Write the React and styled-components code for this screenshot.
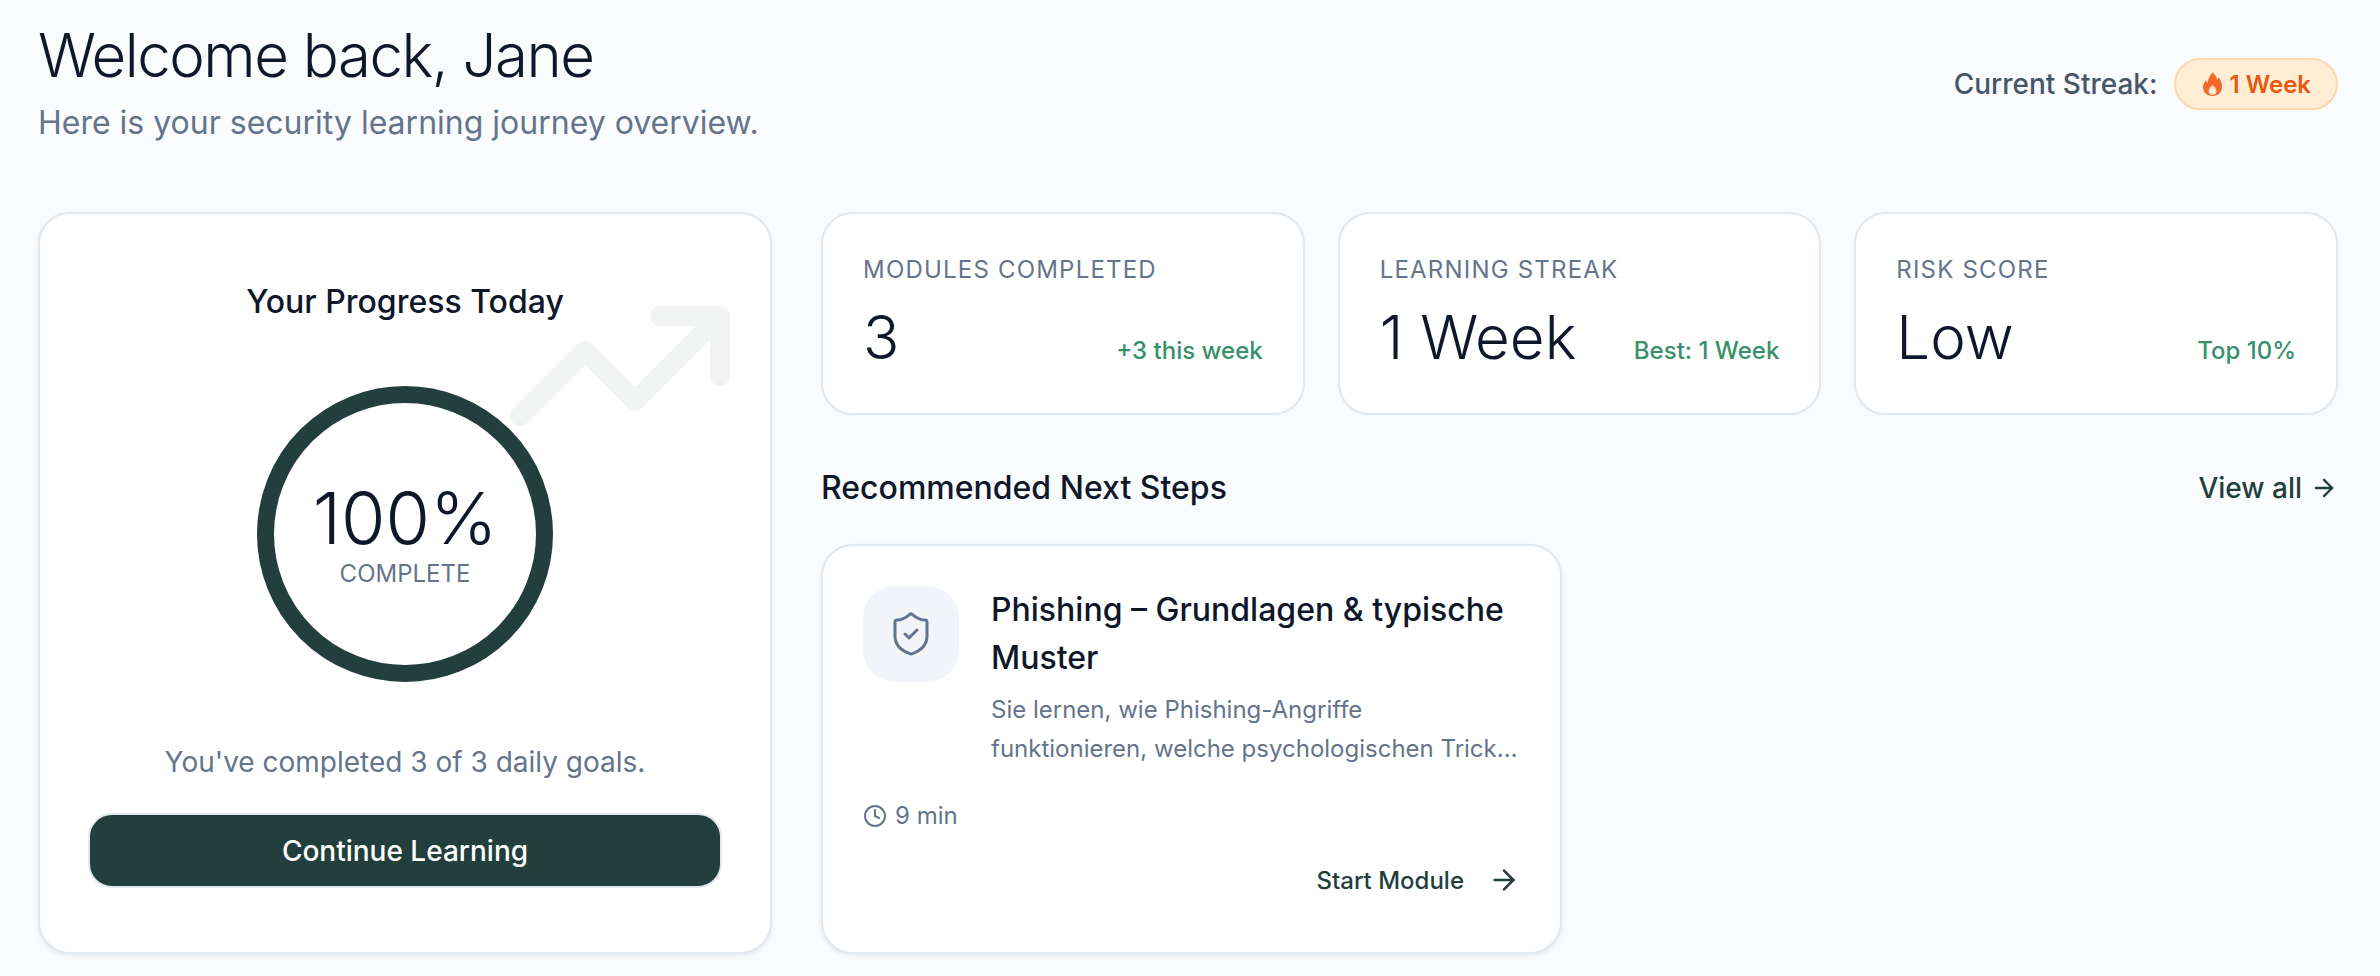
import React from "react";
import styled, { createGlobalStyle } from "styled-components";
import { ArrowRight, Clock, ShieldCheck, TrendingUp } from "lucide-react";

const GlobalStyle = createGlobalStyle`
  * { box-sizing: border-box; }
  body {
    margin: 0;
    background: #f9fbfd;
    font-family: "Inter", "Liberation Sans", sans-serif;
    color: #0f172a;
  }
`;

const Page = styled.div`
  padding: 19px 42px 22px 38px;
`;

const Header = styled.header`
  display: flex;
  justify-content: space-between;
  align-items: center;
  margin-bottom: 65px;
`;

const Title = styled.h1`
  margin: 0;
  font-size: 60px;
  line-height: 72px;
  font-weight: 300;
  letter-spacing: -1.5px;
  color: #0f172a;
`;

const Subtitle = styled.p`
  margin: 8px 0 0;
  font-size: 32px;
  line-height: 48px;
  font-weight: 400;
  color: #64748b;
`;

const Streak = styled.div`
  display: flex;
  align-items: center;
  gap: 17px;
  padding-top: 2px;
  font-size: 28px;
  font-weight: 500;
  color: #475569;
`;

const Badge = styled.span`
  display: flex;
  align-items: center;
  gap: 7px;
  height: 52px;
  padding: 0 25px 0 27px;
  border: 2px solid #fed7aa;
  border-radius: 26px;
  background: #ffedd5;
  font-size: 24px;
  font-weight: 600;
  color: #ea580c;
`;

const Layout = styled.main`
  display: grid;
  grid-template-columns: 734px 1fr;
  gap: 49px;
`;

const Card = styled.section`
  background: #fff;
  border: 2px solid #e2e8f0;
  border-radius: 32px;
  box-shadow: 0 1px 2px rgba(15, 23, 42, 0.03);
`;

const ProgressCard = styled(Card)`
  position: relative;
  overflow: hidden;
  display: flex;
  flex-direction: column;
  align-items: center;
  padding: 64px 48px;
  box-shadow: 0 2px 5px rgba(15, 23, 42, 0.08);
`;

const Watermark = styled.div`
  position: absolute;
  top: 32px;
  right: 30px;
  color: #223f3e;
  opacity: 0.05;
  line-height: 0;
`;

const ProgressTitle = styled.h2`
  margin: 0;
  font-size: 32px;
  line-height: 48px;
  font-weight: 500;
  color: #0f172a;
`;

const Ring = styled.div`
  position: relative;
  width: 320px;
  height: 320px;
  margin-top: 48px;
`;

const RingText = styled.div`
  position: absolute;
  inset: 0;
  display: flex;
  flex-direction: column;
  align-items: center;
  justify-content: center;
`;

const Percent = styled.div`
  font-size: 72px;
  line-height: 80px;
  font-weight: 300;
  color: #0f172a;
`;

const RingLabel = styled.div`
  font-size: 24px;
  line-height: 32px;
  color: #64748b;
  text-transform: uppercase;
`;

const Goals = styled.p`
  margin: 48px 0 31px;
  font-size: 28px;
  line-height: 40px;
  color: #64748b;
`;

const PrimaryButton = styled.button`
  width: 100%;
  height: 75px;
  border: 2px solid #e2e8f0;
  border-radius: 24px;
  background: #223f3e;
  color: #fff;
  font-family: inherit;
  font-size: 28px;
  font-weight: 500;
`;

const RightColumn = styled.div`
  display: flex;
  flex-direction: column;
`;

const Stats = styled.div`
  display: grid;
  grid-template-columns: repeat(3, 1fr);
  gap: 33px;
`;

const StatCard = styled(Card)`
  padding: 40px;
  height: 203px;
`;

const StatLabel = styled.div`
  font-size: 24px;
  line-height: 32px;
  color: #64748b;
  letter-spacing: 1.2px;
  text-transform: uppercase;
`;

const StatRow = styled.div`
  display: flex;
  justify-content: space-between;
  align-items: baseline;
  margin-top: 16px;
`;

const StatValue = styled.div`
  font-size: 60px;
  line-height: 70px;
  font-weight: 300;
  color: #0f172a;
`;

const StatNote = styled.div`
  font-size: 24px;
  font-weight: 500;
  color: #38906a;
`;

const SectionHead = styled.div`
  display: flex;
  justify-content: space-between;
  align-items: center;
  margin: 49px 0 32px;
`;

const SectionTitle = styled.h2`
  margin: 0;
  font-size: 32px;
  line-height: 48px;
  font-weight: 500;
  color: #0f172a;
`;

const ViewAll = styled.a`
  display: flex;
  align-items: center;
  gap: 8px;
  font-size: 28px;
  font-weight: 500;
  color: #223f3e;
`;

const Modules = styled.div`
  display: grid;
  grid-template-columns: repeat(2, 1fr);
  gap: 35px;
  flex: 1;
`;

const ModuleCard = styled(Card)`
  display: flex;
  flex-direction: column;
  padding: 40px;
  box-shadow: 0 2px 5px rgba(15, 23, 42, 0.08);
`;

const ModuleTop = styled.div`
  display: flex;
  gap: 32px;
`;

const IconBox = styled.div`
  flex: none;
  display: flex;
  align-items: center;
  justify-content: center;
  width: 96px;
  height: 96px;
  border-radius: 32px;
  background: #f1f5f9;
  color: #64748b;
`;

const ModuleTitle = styled.h3`
  margin: 0;
  font-size: 32px;
  line-height: 48px;
  font-weight: 500;
  color: #0f172a;
`;

const ModuleDesc = styled.p`
  margin: 8px 0 0;
  font-size: 24px;
  line-height: 39px;
  color: #64748b;
  display: -webkit-box;
  -webkit-box-orient: vertical;
  -webkit-line-clamp: 2;
  overflow: hidden;
`;

const Meta = styled.div`
  display: flex;
  align-items: center;
  gap: 8px;
  margin-top: 32px;
  font-size: 24px;
  line-height: 32px;
  color: #64748b;
`;

const StartButton = styled.a`
  display: flex;
  align-items: center;
  align-self: flex-end;
  gap: 24px;
  margin-top: auto;
  padding: 15px 0 16px;
  font-size: 24px;
  font-weight: 500;
  color: #223f3e;
`;

const stats = [
  { label: "Modules Completed", value: "3", note: "+3 this week" },
  { label: "Learning Streak", value: "1 Week", note: "Best: 1 Week" },
  { label: "Risk Score", value: "Low", note: "Top 10%" },
];

function Flame() {
  return (
    <svg width="19" height="24" viewBox="0 0 19 24">
      <path
        fill="#f0692a"
        d="M10 0c1 3 4 4 4 8 1-1 1-2 1-3 3 3 4 6 4 10 0 5-4 9-9.500 9S0 20 0 15c0-3 2-5 3-7 0 1 .5 2 1.500 3C4.500 7 7 4 10 0z"
      />
      <path fill="#fbd9b5" d="M9.500 13c2.500 2 4 3.500 4 6a4 4 0 0 1-8 0c0-2.500 2-4 4-6z" />
      <circle cx="9.500" cy="19" r="2.500" fill="#fff3e6" />
    </svg>
  );
}

export default function App() {
  return (
    <Page>
      <GlobalStyle />
      <Header>
        <div>
          <Title>Welcome back, Jane</Title>
          <Subtitle>Here is your security learning journey overview.</Subtitle>
        </div>
        <Streak>
          Current Streak:
          <Badge>
            <Flame />
            1 Week
          </Badge>
        </Streak>
      </Header>
      <Layout>
        <ProgressCard>
          <Watermark>
            <TrendingUp size={240} strokeWidth={2} />
          </Watermark>
          <ProgressTitle>Your Progress Today</ProgressTitle>
          <Ring>
            <svg width="320" height="320" viewBox="0 0 320 320">
              <circle cx="160" cy="160" r="139.5" fill="none" stroke="#223f3e" strokeWidth="17" />
            </svg>
            <RingText>
              <Percent>100%</Percent>
              <RingLabel>Complete</RingLabel>
            </RingText>
          </Ring>
          <Goals>You've completed 3 of 3 daily goals.</Goals>
          <PrimaryButton>Continue Learning</PrimaryButton>
        </ProgressCard>
        <RightColumn>
          <Stats>
            {stats.map((s) => (
              <StatCard key={s.label}>
                <StatLabel>{s.label}</StatLabel>
                <StatRow>
                  <StatValue>{s.value}</StatValue>
                  <StatNote>{s.note}</StatNote>
                </StatRow>
              </StatCard>
            ))}
          </Stats>
          <SectionHead>
            <SectionTitle>Recommended Next Steps</SectionTitle>
            <ViewAll>
              View all
              <ArrowRight size={28} />
            </ViewAll>
          </SectionHead>
          <Modules>
            <ModuleCard>
              <ModuleTop>
                <IconBox>
                  <ShieldCheck size={48} strokeWidth={1.5} />
                </IconBox>
                <div>
                  <ModuleTitle>Phishing – Grundlagen &amp; typische Muster</ModuleTitle>
                  <ModuleDesc>
                    Sie lernen, wie Phishing-Angriffe funktionieren, welche psychologischen
                    Tricks Angreifer nutzen und wie Sie sich im Alltag schützen können.
                  </ModuleDesc>
                </div>
              </ModuleTop>
              <Meta>
                <Clock size={24} strokeWidth={2} />9 min
              </Meta>
              <StartButton>
                Start Module
                <ArrowRight size={32} />
              </StartButton>
            </ModuleCard>
          </Modules>
        </RightColumn>
      </Layout>
    </Page>
  );
}
